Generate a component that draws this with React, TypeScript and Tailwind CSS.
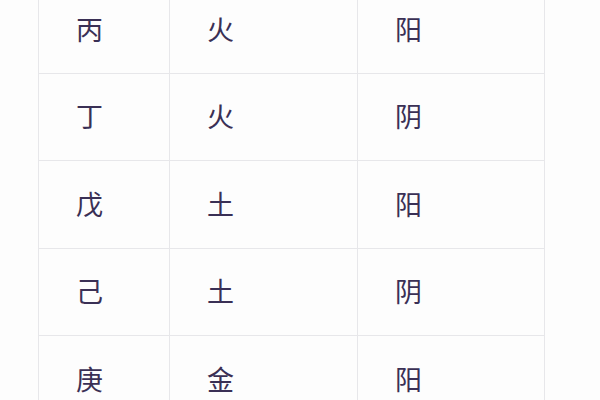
const rows: [string, string, string][] = [
  ["丙", "火", "阳"],
  ["丁", "火", "阴"],
  ["戊", "土", "阳"],
  ["己", "土", "阴"],
  ["庚", "金", "阳"],
  ["辛", "金", "阴"],
];

export default function App() {
  return (
    <div className="h-[400px] w-[600px] overflow-hidden bg-[#fdfdfd] font-['Noto_Sans_CJK_SC',sans-serif]">
      <table className="ml-[38px] mt-[-15px] border-collapse text-[27px] leading-none text-[#3a3055]">
        <tbody>
          {rows.map(([stem, element, yinYang]) => (
            <tr key={stem} className="h-[87.5px]">
              <td className="w-[131px] border border-[#e7e7ea] pb-[2px] pl-[37px]">{stem}</td>
              <td className="w-[188px] border border-[#e7e7ea] pb-[2px] pl-[37px]">{element}</td>
              <td className="w-[187px] border border-[#e7e7ea] pb-[2px] pl-[37px]">{yinYang}</td>
            </tr>
          ))}
        </tbody>
      </table>
    </div>
  );
}
